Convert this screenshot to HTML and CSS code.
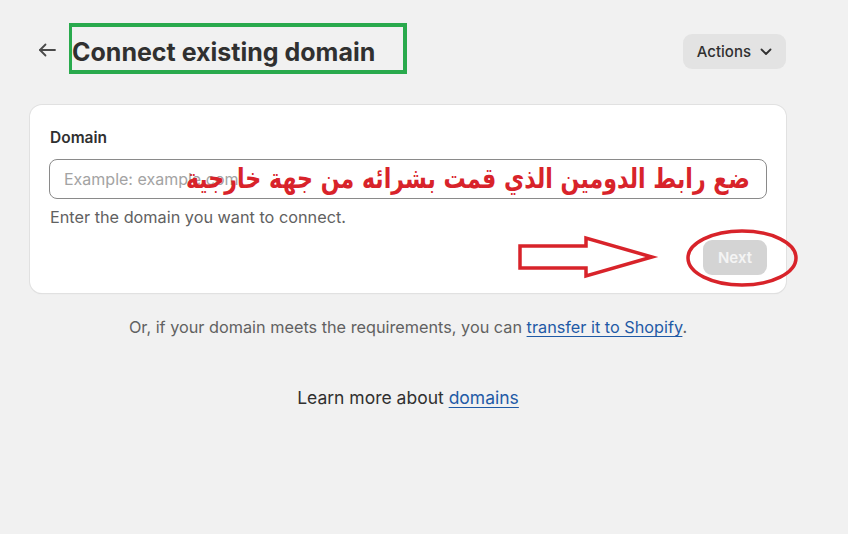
FILE: index.html
```html
<!DOCTYPE html>
<html lang="en">
<head>
    <meta charset="UTF-8">
    <meta name="viewport" content="width=device-width, initial-scale=1.0">
    <title>Connect existing domain</title>
    <link rel="stylesheet" href="styles.css">
</head>
<body>
    <div class="page">
        <header class="page-header">
            <a href="#" class="back-link" aria-label="Back">
                <svg width="18" height="14" viewBox="0 0 18 14" fill="none" stroke="#4a4a4a" stroke-width="1.8" stroke-linecap="round" stroke-linejoin="round">
                    <path d="M17 7H2"/>
                    <path d="M7.5 1.5L2 7l5.5 5.5"/>
                </svg>
            </a>
            <h1 class="page-title">Connect existing domain</h1>
            <button class="actions-btn">
                Actions
                <svg width="12" height="8" viewBox="0 0 12 8" fill="none" stroke="#303030" stroke-width="1.8" stroke-linecap="round" stroke-linejoin="round">
                    <path d="M1.5 1.5L6 6l4.5-4.5"/>
                </svg>
            </button>
        </header>

        <div class="card">
            <label class="field-label" for="domain">Domain</label>
            <div class="field-wrap">
                <input type="text" id="domain" class="field-input" placeholder="Example: example.com">
                <!-- red note drawn over the screenshot -->
                <span class="note-ar" dir="rtl" lang="ar">ضع رابط الدومين الذي قمت بشرائه من جهة خارجية</span>
            </div>
            <p class="field-help">Enter the domain you want to connect.</p>
            <div class="card-footer">
                <button class="next-btn" disabled>Next</button>
            </div>

            <!-- arrow + circle marks over the Next button -->
            <svg class="marks" width="300" height="64" viewBox="0 0 300 64" fill="none" stroke="#d8232a" stroke-width="3.5" stroke-linejoin="miter">
                <path d="M2 15H68V7L134 26L68 45V37H2Z"/>
                <ellipse cx="224" cy="27" rx="54" ry="27"/>
            </svg>
        </div>

        <p class="transfer-note">Or, if your domain meets the requirements, you can <a href="#" class="link">transfer it to Shopify</a>.</p>

        <p class="learn-more">Learn more about <a href="#" class="link">domains</a></p>
    </div>
</body>
</html>
```

FILE: styles.css
```css
body {
    margin: 0;
    padding: 0;
    font-family: Inter, "Noto Sans", sans-serif;
    background-color: #f1f1f1;
    color: #303030;
}

.page {
    width: 756px;
    padding: 23px 0 0 30px;
}

/* Header */
.page-header {
    display: flex;
    align-items: center;
}

.back-link {
    display: flex;
    align-items: center;
    width: 39px;
    padding-left: 8px;
    box-sizing: border-box;
    height: 30px;
    margin-top: 3px;
}

.page-title {
    margin: 0;
    font-size: 25px;
    font-weight: 700;
    color: #303030;
    border: 4px solid #29aa4d;
    border-left-width: 3px;
    height: 40px;
    padding: 3px 28px 0 0;
    line-height: 45px;
}

.actions-btn {
    margin-left: auto;
    margin-top: 6px;
    display: inline-flex;
    align-items: center;
    gap: 9px;
    height: 35px;
    padding: 0 14px;
    border: none;
    border-radius: 9px;
    background-color: #e3e3e3;
    font-family: inherit;
    font-size: 15px;
    font-weight: 500;
    color: #303030;
}

/* Card */
.card {
    position: relative;
    margin-top: 31px;
    background-color: #fff;
    border-radius: 12px;
    box-shadow: 0 0 0 1px #e1e1e1, 0 1px 1px #d4d4d4;
    padding: 23px 19px 18px 19px;
}

.field-label {
    display: block;
    font-size: 15.5px;
    font-weight: 600;
    margin: 0 0 12px 1px;
}

.field-wrap {
    position: relative;
}

.field-input {
    width: 100%;
    box-sizing: border-box;
    height: 40px;
    padding: 0 14px;
    border: 1px solid #8a8a8a;
    border-radius: 8px;
    font-family: inherit;
    font-size: 16px;
    color: #303030;
}

.field-input::placeholder {
    color: #a3a3a3;
}

.note-ar {
    position: absolute;
    right: 17px;
    top: 0;
    font-family: "DejaVu Sans", sans-serif;
    font-weight: 700;
    font-size: 28px;
    line-height: 40px;
    color: #d8232a;
    white-space: nowrap;
    transform: scaleX(0.79);
    transform-origin: right center;
}

.field-help {
    margin: 8px 0 0 1px;
    font-size: 16.25px;
    color: #616161;
}

.card-footer {
    display: flex;
    justify-content: flex-end;
    margin-top: 13px;
}

.next-btn {
    width: 64px;
    height: 35px;
    border: none;
    border-radius: 9px;
    background-color: #d4d4d4;
    color: #f4f4f4;
    font-family: inherit;
    font-size: 15px;
    font-weight: 600;
}

.marks {
    position: absolute;
    left: 488px;
    top: 126px;
    overflow: visible;
}

/* Footer text */
.transfer-note {
    margin: 24px 0 0;
    text-align: center;
    font-size: 16.25px;
    color: #616161;
}

.learn-more {
    margin: 50px 0 0;
    text-align: center;
    font-size: 17.5px;
    color: #303030;
}

.link {
    color: #1f5aa6;
    text-decoration: underline;
    text-underline-offset: 3px;
}
```
